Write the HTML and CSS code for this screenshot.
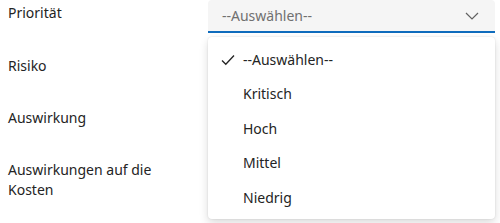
FILE: index.html
```html
<!DOCTYPE html>
<html lang="de">
<head>
  <meta charset="UTF-8" />
  <title>Risiko</title>
  <link rel="stylesheet" href="styles.css">
</head>
<body>
  <div class="form">
    <div class="row">
      <label class="row-label">Priorität</label>
      <div class="field">
        <div class="dropdown">
          <span class="placeholder">--Auswählen--</span>
          <svg class="chevron" width="14" height="8" viewBox="0 0 14 8">
            <path d="M1 1 L7 7 L13 1" fill="none" stroke="#616161" stroke-width="1.2" />
          </svg>
        </div>

        <!-- Aufgeklappte Liste -->
        <ul class="listbox">
          <li class="option selected">
            <svg class="check" width="14" height="12" viewBox="0 0 14 12">
              <path d="M1 6.5 L4.8 10.3 L13 1.5" fill="none" stroke="#242424" stroke-width="1.3" />
            </svg>
            --Auswählen--
          </li>
          <li class="option">Kritisch</li>
          <li class="option">Hoch</li>
          <li class="option">Mittel</li>
          <li class="option">Niedrig</li>
        </ul>
      </div>
    </div>
    <div class="row">
      <label class="row-label">Risiko</label>
      <div class="field"></div>
    </div>
    <div class="row">
      <label class="row-label">Auswirkung</label>
      <div class="field"></div>
    </div>
    <div class="row">
      <label class="row-label">Auswirkungen auf die Kosten</label>
      <div class="field"></div>
    </div>
  </div>
</body>
</html>
```

FILE: styles.css
```css
html, body {
  height: 100%;
}

body {
  margin: 0;
  padding: 0;
  min-height: 223px;
  font-family: "Noto Sans", "Open Sans", sans-serif;
  font-size: 14px;
  color: #242424;
  background: #fff;
}

.form {
  display: flex;
  flex-direction: column;
  gap: 20px;
  padding: 0 5px 0 8px;
}

.row {
  display: grid;
  grid-template-columns: 200px 1fr;
  min-height: 32px;
}

.row-label {
  padding-top: 3px;
  line-height: 20px;
  padding-right: 40px;
}

.field {
  position: relative;
}

/* Feld */
.dropdown {
  display: flex;
  align-items: center;
  justify-content: space-between;
  height: 33px;
  padding: 0 16px 0 14px;
  background: #f5f5f5;
  border-radius: 4px 4px 0 0;
  border-bottom: 2px solid #0f6cbd;
  box-sizing: border-box;
}

.placeholder {
  color: #707070;
  font-size: 14px;
}

/* Liste */
.listbox {
  position: absolute;
  top: 37px;
  left: 0;
  right: 0;
  margin: 0;
  padding: 5px 0 4px;
  list-style: none;
  background: #fff;
  border-radius: 4px;
  box-shadow: 0 0 2px rgba(0, 0, 0, 0.12), 0 4px 10px rgba(0, 0, 0, 0.14);
  z-index: 1;
}

.option {
  display: flex;
  align-items: center;
  height: 34.5px;
  padding-left: 35px;
  position: relative;
}

.check {
  position: absolute;
  left: 13px;
  top: 12px;
}
```
